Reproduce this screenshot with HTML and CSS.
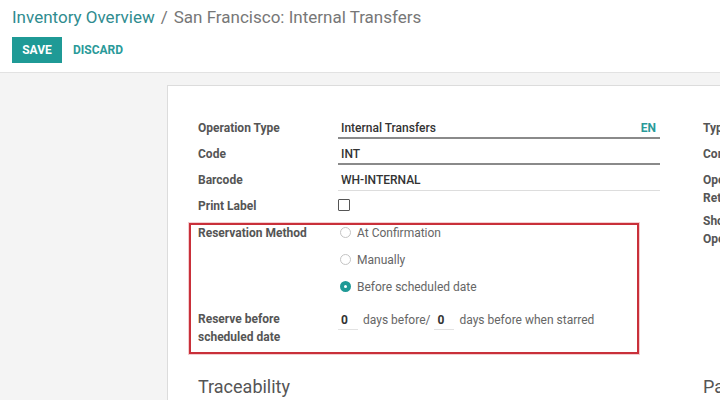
FILE: index.html
```html
<!DOCTYPE html>
<html lang="en">

<head>
    <meta charset="UTF-8">
    <meta name="viewport" content="width=device-width, initial-scale=1.0">
    <title>San Francisco: Internal Transfers</title>
    <link rel="stylesheet" href="styles.css">
</head>

<body>
    <header class="control-panel">
        <ol class="breadcrumb">
            <li class="crumb-link">Inventory Overview</li>
            <li class="crumb-sep">/</li>
            <li class="crumb-current">San Francisco: Internal Transfers</li>
        </ol>
        <div class="buttons">
            <button class="btn-save">SAVE</button>
            <button class="btn-discard">DISCARD</button>
        </div>
    </header>

    <main class="content">
        <div class="sheet">
            <div class="groups">
                <div class="group group-left">
                    <div class="row">
                        <label class="label">Operation Type</label>
                        <div class="field field-required">
                            <span>Internal Transfers</span>
                            <span class="lang">EN</span>
                        </div>
                    </div>
                    <div class="row">
                        <label class="label">Code</label>
                        <div class="field field-required"><span>INT</span></div>
                    </div>
                    <div class="row">
                        <label class="label">Barcode</label>
                        <div class="field"><span>WH-INTERNAL</span></div>
                    </div>
                    <div class="row">
                        <label class="label">Print Label</label>
                        <div class="field-plain"><span class="checkbox"></span></div>
                    </div>
                    <div class="row row-radio">
                        <label class="label">Reservation Method</label>
                        <div class="radios">
                            <div class="radio"><span class="dot"></span>At Confirmation</div>
                            <div class="radio"><span class="dot"></span>Manually</div>
                            <div class="radio checked"><span class="dot"></span>Before scheduled date</div>
                        </div>
                    </div>
                    <div class="row row-days">
                        <label class="label">Reserve before<br>scheduled date</label>
                        <div class="days">
                            <span class="num">0</span>
                            <span class="days-text">days before/</span>
                            <span class="num">0</span>
                            <span class="days-text">days before when starred</span>
                        </div>
                    </div>
                </div>

                <div class="group group-right">
                    <div class="row"><label class="label">Type of Operation</label></div>
                    <div class="row"><label class="label">Company</label></div>
                    <div class="row row-tall"><label class="label">Operation Type for Returns</label></div>
                    <div class="row row-tall"><label class="label">Show Detailed Operations</label></div>
                </div>
            </div>

            <div class="groups sections">
                <h2 class="group-title group-left">Traceability</h2>
                <h2 class="group-title group-right">Packages</h2>
            </div>

            <!-- annotation drawn over the form -->
            <div class="highlight"></div>
        </div>
    </main>
</body>

</html>
```

FILE: styles.css
```css
html, body {
    margin: 0;
    padding: 0;
    width: 720px;
    height: 400px;
    overflow: hidden;
}

body {
    font-family: Roboto, "Liberation Sans", sans-serif;
    font-size: 12px;
    color: #4c4c4c;
    background-color: #f4f4f4;
}

/* Control panel */
.control-panel {
    background-color: #ffffff;
    border-bottom: 1px solid #e2e2e2;
    height: 73px;
    box-sizing: border-box;
    padding: 6px 12px 0;
}

.breadcrumb {
    list-style: none;
    margin: 0;
    padding: 0;
    display: flex;
    gap: 6px;
    font-size: 17px;
    line-height: 22px;
}

.crumb-link {
    color: #2f8c8f;
}

.crumb-sep,
.crumb-current {
    color: #777;
}

.buttons {
    display: flex;
    align-items: center;
    gap: 11px;
    margin-top: 9px;
}

.buttons button {
    font-family: inherit;
    font-size: 12px;
    font-weight: 700;
    border: none;
    height: 26px;
    cursor: pointer;
}

.btn-save {
    background-color: #1f9a96;
    color: #ffffff;
    width: 50px;
    padding: 0;
}

.btn-discard {
    background: none;
    color: #2a9a99;
    padding: 0;
}

/* Form sheet */
.content {
    padding: 12px 0 0 167px;
}

.sheet {
    position: relative;
    width: 700px;
    height: 400px;
    background-color: #ffffff;
    border: 1px solid #dcdcdc;
    padding: 28px 0 0 30px;
    box-sizing: border-box;
}

.groups {
    display: flex;
    gap: 43px;
}

.group-left {
    width: 462px;
    flex-shrink: 0;
}

.group-right {
    width: 140px;
    flex-shrink: 0;
}

.row {
    display: grid;
    grid-template-columns: 140px 1fr;
    min-height: 26px;
    align-items: start;
}

.label {
    font-weight: 700;
    color: #555;
    line-height: 18px;
    padding-top: 5px;
}

.group-right .row {
    grid-template-columns: 120px;
}

.row-tall {
    margin-top: 4px;
}

.row-tall .label {
    padding-top: 1px;
}

.field {
    display: flex;
    justify-content: space-between;
    height: 25px;
    line-height: 18px;
    padding: 5px 4px 0 3px;
    box-sizing: border-box;
    border-bottom: 1px solid #dddddd;
    color: #333;
    font-weight: 500;
}

.field-required {
    border-bottom: 2px solid #8a8a8a;
}

.lang {
    color: #2a9a99;
    font-weight: 700;
}

.field-plain {
    padding-top: 7px;
}

.checkbox {
    display: block;
    width: 10px;
    height: 10px;
    border: 1px solid #555;
    border-radius: 1px;
}

/* Reservation method */
.row-radio {
    margin-top: 1px;
}

.radios {
    display: flex;
    flex-direction: column;
}

.radio {
    display: flex;
    align-items: center;
    gap: 6px;
    height: 27px;
    padding-left: 2px;
    color: #666;
}

.radio .dot {
    width: 9px;
    height: 9px;
    border: 1px solid #c4c4c4;
    border-radius: 50%;
    box-sizing: content-box;
}

.radio.checked .dot {
    width: 3px;
    height: 3px;
    background-color: #ffffff;
    border: 4px solid #1f9a96;
}

.row-days {
    margin-top: 10px;
}

.row-days .label {
    padding-top: 0;
}

.days {
    display: flex;
    align-items: center;
    height: 20px;
    color: #666;
}

.num {
    width: 17px;
    padding-left: 3px;
    border-bottom: 1px solid #e2e2e2;
    color: #333;
    font-weight: 700;
    line-height: 18px;
    margin-right: 5px;
}

.days-text + .num {
    margin-left: 4px;
}

/* Section headings */
.sections {
    margin-top: 29px;
}

.group-title {
    margin: 0;
    font-size: 18px;
    font-weight: 400;
    line-height: 24px;
    color: #555;
}

/* Red annotation box */
.highlight {
    position: absolute;
    left: 21px;
    top: 137px;
    width: 450px;
    height: 131px;
    box-sizing: border-box;
    border: 2px solid #c9303a;
    box-shadow: 0 0 0 1px rgba(220, 90, 100, 0.3);
}
```
